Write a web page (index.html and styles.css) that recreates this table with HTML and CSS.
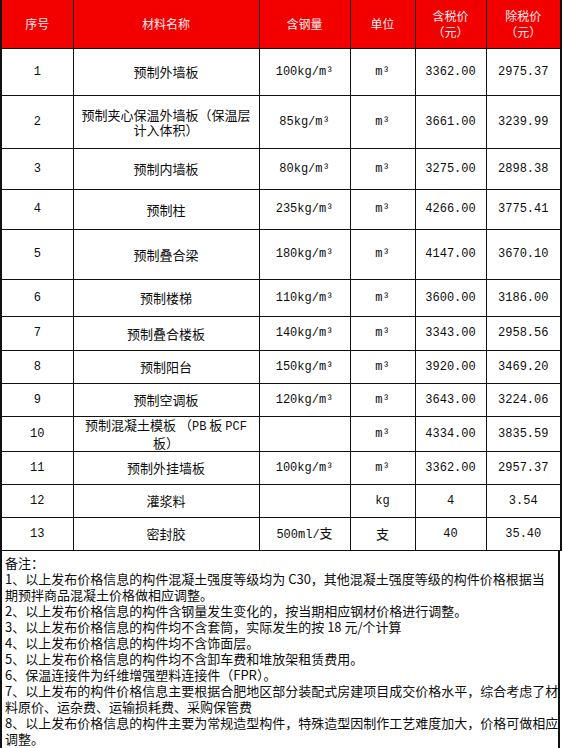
FILE: index.html
```html
<!DOCTYPE html>
<html lang="zh-CN">
<head>
<meta charset="utf-8">
<title>预制构件价格信息</title>
<link rel="stylesheet" href="styles.css">
</head>
<body>
<table class="price">
  <colgroup>
    <col class="c-no"><col class="c-name"><col class="c-steel"><col class="c-unit"><col class="c-tax"><col class="c-net">
  </colgroup>
  <thead>
    <tr class="hd">
      <th>序号</th><th>材料名称</th><th>含钢量</th><th>单位</th><th>含税价<br>（元）</th><th>除税价<br>（元）</th>
    </tr>
  </thead>
  <tbody>
    <tr class="h47"><td>1</td><td class="cn">预制外墙板</td><td>100kg/m³</td><td>m³</td><td>3362.00</td><td>2975.37</td></tr>
    <tr class="h53"><td>2</td><td class="cn">预制夹心保温外墙板（保温层计入体积）</td><td>85kg/m³</td><td>m³</td><td>3661.00</td><td>3239.99</td></tr>
    <tr class="h41"><td>3</td><td class="cn">预制内墙板</td><td>80kg/m³</td><td>m³</td><td>3275.00</td><td>2898.38</td></tr>
    <tr class="h40"><td>4</td><td class="cn">预制柱</td><td>235kg/m³</td><td>m³</td><td>4266.00</td><td>3775.41</td></tr>
    <tr class="h50"><td>5</td><td class="cn">预制叠合梁</td><td>180kg/m³</td><td>m³</td><td>4147.00</td><td>3670.10</td></tr>
    <tr class="h37"><td>6</td><td class="cn">预制楼梯</td><td>110kg/m³</td><td>m³</td><td>3600.00</td><td>3186.00</td></tr>
    <tr class="h34"><td>7</td><td class="cn">预制叠合楼板</td><td>140kg/m³</td><td>m³</td><td>3343.00</td><td>2958.56</td></tr>
    <tr class="h33"><td>8</td><td class="cn">预制阳台</td><td>150kg/m³</td><td>m³</td><td>3920.00</td><td>3469.20</td></tr>
    <tr class="h33"><td>9</td><td class="cn">预制空调板</td><td>120kg/m³</td><td>m³</td><td>3643.00</td><td>3224.06</td></tr>
    <tr class="h33"><td>10</td><td class="cn tight">预制混凝土模板 （<span class="lat">PB</span> 板 <span class="lat">PCF</span><br>板）</td><td></td><td>m³</td><td>4334.00</td><td>3835.59</td></tr>
    <tr class="h33"><td>11</td><td class="cn">预制外挂墙板</td><td>100kg/m³</td><td>m³</td><td>3362.00</td><td>2957.37</td></tr>
    <tr class="h33"><td>12</td><td class="cn">灌浆料</td><td></td><td>kg</td><td>4</td><td>3.54</td></tr>
    <tr class="h33"><td>13</td><td class="cn">密封胶</td><td>500ml/<span class="cn">支</span></td><td class="cn">支</td><td>40</td><td>35.40</td></tr>
  </tbody>
</table>
<div class="notes">
  备注：<br>
  1、以上发布价格信息的构件混凝土强度等级均为 C30，其他混凝土强度等级的构件价格根据当<br>
  期预拌商品混凝土价格做相应调整。<br>
  2、以上发布价格信息的构件含钢量发生变化的，按当期相应钢材价格进行调整。<br>
  3、以上发布价格信息的构件均不含套筒，实际发生的按 18 元/个计算<br>
  4、以上发布价格信息的构件均不含饰面层。<br>
  5、以上发布价格信息的构件均不含卸车费和堆放架租赁费用。<br>
  6、保温连接件为纤维增强塑料连接件（FPR）。<br>
  7、以上发布的构件价格信息主要根据合肥地区部分装配式房建项目成交价格水平，综合考虑了材<br>
  料原价、运杂费、运输损耗费、采购保管费<br>
  8、以上发布价格信息的构件主要为常规造型构件，特殊造型因制作工艺难度加大，价格可做相应<br>
  调整。
</div>
</body>
</html>
```

FILE: styles.css
```css
html, body {
  margin: 0;
  padding: 0;
  background: #ffffff;
}

.price {
  width: 560px;
  border-collapse: collapse;
  table-layout: fixed;
  border-left: 2px solid #111111;
  border-right: 2px solid #111111;
  font-family: "Liberation Mono", "Noto Sans CJK SC", monospace;
  font-size: 12px;
  color: #0d0d0d;
}

.c-no { width: 72px; }
.c-name { width: 186px; }
.c-steel { width: 91px; }
.c-unit { width: 65px; }
.c-tax { width: 71px; }
.c-net { width: 75px; }

.price th,
.price td {
  border: 1px solid #111111;
  text-align: center;
  vertical-align: middle;
  padding: 0 4px;
  overflow: hidden;
}

.price thead th {
  border-top: none;
}

.hd {
  height: 48px;
  background: #f20000;
}

.hd th {
  font-family: "Noto Sans CJK SC", sans-serif;
  font-weight: normal;
  font-size: 12px;
  line-height: 16px;
  color: #ffeeee;
}

.h47 { height: 47px; }
.h53 { height: 53px; }
.h41 { height: 41px; }
.h40 { height: 40px; }
.h50 { height: 50px; }
.h37 { height: 37px; }
.h34 { height: 34px; }
.h33 { height: 33px; }

.cn {
  font-family: "Noto Sans CJK SC", sans-serif;
  font-size: 13px;
  line-height: 15px;
}

.tight {
  line-height: 16px;
  padding: 0 2px;
}

.lat {
  font-family: "Liberation Mono", monospace;
  font-size: 12px;
}

.notes {
  width: 560px;
  box-sizing: border-box;
  border-left: 2px solid #111111;
  border-right: 2px solid #111111;
  border-bottom: 1px solid #111111;
  padding: 4px 3px 1px 3px;
  font-family: "Noto Sans CJK SC", sans-serif;
  font-size: 13px;
  line-height: 16px;
  color: #0d0d0d;
  white-space: nowrap;
}
```
